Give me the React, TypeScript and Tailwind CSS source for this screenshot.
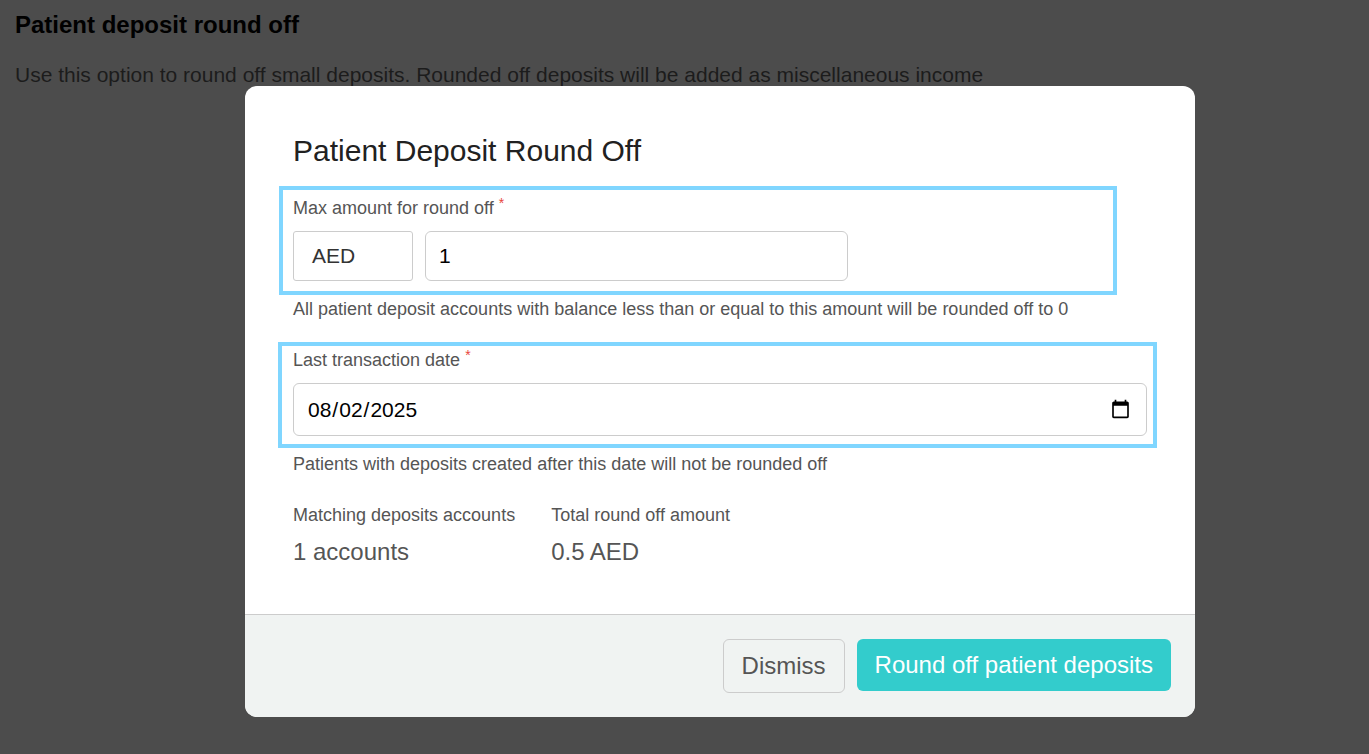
import { useState } from "react";
import type { ReactNode } from "react";

function FieldLabel({ htmlFor, children }: { htmlFor: string; children: ReactNode }) {
  return (
    <label htmlFor={htmlFor} className="block text-[18px] leading-6">
      {children} <sup className="-top-[6px] text-[14px] leading-none text-[#e8453c]">*</sup>
    </label>
  );
}

function Stat({ label, value }: { label: string; value: string }) {
  return (
    <div>
      <dt className="text-[18px] leading-6">{label}</dt>
      <dd className="mt-[9px] text-2xl">{value}</dd>
    </div>
  );
}

export default function App() {
  const [amount, setAmount] = useState("1");
  const [date, setDate] = useState("2025-08-02");

  return (
    <div className="min-h-screen bg-[#4c4c4c] font-['Liberation_Sans',Arial,sans-serif]">
      <main className="px-[15px] pt-[9px]">
        <h1 className="text-2xl font-bold text-black">Patient deposit round off</h1>
        <p className="mt-[18px] text-[21px] leading-8 text-[#1c1c1c]">
          Use this option to round off small deposits. Rounded off deposits will be added as miscellaneous income
        </p>
      </main>

      <div className="absolute inset-x-0 top-[86px] flex justify-center pb-9 pl-[71px]">
        <section
          role="dialog"
          aria-labelledby="dialog-title"
          className="w-full max-w-[950px] overflow-hidden rounded-xl bg-white text-[#555]"
        >
          <div className="px-12 pt-[47px] pb-[46px]">
            <h2 id="dialog-title" className="text-3xl text-[#212121]">
              Patient Deposit Round Off
            </h2>

            <div className="mt-[17px] mr-[30px] -ml-[14px] border-4 border-[#80d6ff] px-[10px] pt-[6px] pb-[10px]">
              <FieldLabel htmlFor="amount">Max amount for round off</FieldLabel>
              <div className="mt-[11px] flex gap-3">
                <span className="flex h-[50px] w-[120px] items-center rounded-[3px] border border-[#ccc] px-[18px] text-[21px] text-[#333]">
                  AED
                </span>
                <input
                  id="amount"
                  type="text"
                  inputMode="decimal"
                  value={amount}
                  onChange={(e) => setAmount(e.target.value)}
                  className="h-[50px] w-[423px] min-w-0 rounded-md border border-[#ccc] px-[13px] text-[21px] text-black"
                />
              </div>
            </div>
            <p className="mt-0.5 text-[18px] leading-6">
              All patient deposit accounts with balance less than or equal to this amount will be rounded off to 0
            </p>

            <div className="-mr-[10px] mt-[21px] -ml-[15px] border-4 border-[#80d6ff] pt-[2px] pr-[6px] pb-2 pl-[11px]">
              <FieldLabel htmlFor="date">Last transaction date</FieldLabel>
              <input
                id="date"
                type="date"
                value={date}
                onChange={(e) => setDate(e.target.value)}
                className="mt-[11px] block h-[53px] w-full rounded-md border border-[#ccc] px-[13px] text-[21px] text-black"
              />
            </div>
            <p className="mt-1 text-[18px] leading-6">
              Patients with deposits created after this date will not be rounded off
            </p>

            <dl className="mt-[27px] flex gap-9">
              <Stat label="Matching deposits accounts" value="1 accounts" />
              <Stat label="Total round off amount" value="0.5 AED" />
            </dl>
          </div>

          <footer className="flex items-start justify-end gap-3 border-t border-[#ccc] bg-[#f0f3f2] p-6">
            <button type="button" className="h-[54px] rounded-md border border-[#ccc] px-[18px] text-2xl">
              Dismiss
            </button>
            <button type="button" className="h-[52px] rounded-md bg-[#33cccc] px-[18px] text-2xl text-white">
              Round off patient deposits
            </button>
          </footer>
        </section>
      </div>
    </div>
  );
}
